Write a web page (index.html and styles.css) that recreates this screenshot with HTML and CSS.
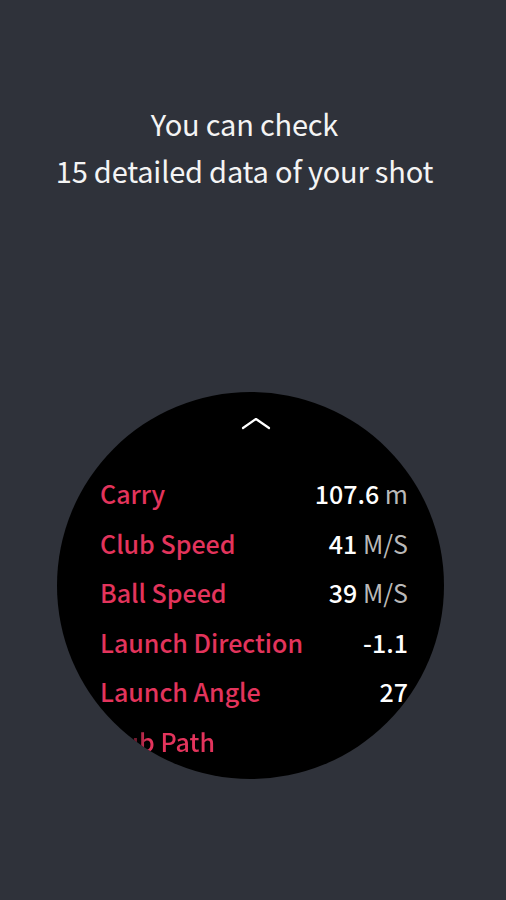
FILE: index.html
```html
<!DOCTYPE html>
<html lang="en">
<head>
  <meta charset="UTF-8" />
  <meta name="viewport" content="width=device-width, initial-scale=1.0" />
  <title>Shot Data</title>
  <link rel="stylesheet" href="styles.css">
</head>
<body>
  <div class="intro">
    <h1>You can check<br>15 detailed data of your shot</h1>
  </div>
  <div class="watch">
    <svg class="chevron" width="30" height="14" viewBox="0 0 30 14">
      <polyline points="2,12 15,3 28,12" fill="none" stroke="#fff" stroke-width="2.2" stroke-linecap="round" stroke-linejoin="round" />
    </svg>
    <ul class="stats">
      <li><span class="label">Carry</span><span class="value">107.6 <small>m</small></span></li>
      <li><span class="label">Club Speed</span><span class="value">41 <small>M/S</small></span></li>
      <li><span class="label">Ball Speed</span><span class="value">39 <small>M/S</small></span></li>
      <li><span class="label">Launch Direction</span><span class="value">-1.1</span></li>
      <li><span class="label">Launch Angle</span><span class="value">27</span></li>
      <li class="faded"><span class="label">Club Path</span><span class="value"></span></li>
    </ul>
  </div>
</body>
</html>
```

FILE: styles.css
```css
body {
  margin: 0;
  background-color: #2f323a;
  font-family: "Noto Sans CJK KR", "Noto Sans", sans-serif;
  height: 900px;
  overflow: hidden;
}
.intro {
  padding: 100px 17px 0 0;
  text-align: center;
}
.intro h1 {
  margin: 0;
  color: #f4f4f4;
  font-size: 29px;
  font-weight: 400;
  line-height: 47px;
  letter-spacing: -0.2px;
}
.watch {
  width: 387px;
  height: 387px;
  margin: 198px 0 0 57px;
  border-radius: 50%;
  background: #000;
  overflow: hidden;
  display: flex;
  flex-direction: column;
  align-items: center;
}
.chevron {
  margin-top: 24px;
  margin-left: 10px;
}
.stats {
  list-style: none;
  margin: 39px 0 0;
  padding: 0 36px 0 43px;
  width: 100%;
  box-sizing: border-box;
}
.stats li {
  display: flex;
  justify-content: space-between;
  align-items: baseline;
  height: 49.6px;
  font-size: 25px;
  line-height: 49.6px;
}
.label {
  color: #e3345c;
  font-weight: 500;
}
.value {
  color: #fff;
  font-weight: 500;
}
.value small {
  font-size: 25px;
  color: #b9b9b9;
  font-weight: 400;
}
.faded {
  -webkit-mask-image: linear-gradient(to right, transparent 0, transparent 22px, #000 48px);
  mask-image: linear-gradient(to right, transparent 0, transparent 22px, #000 48px);
}
```
